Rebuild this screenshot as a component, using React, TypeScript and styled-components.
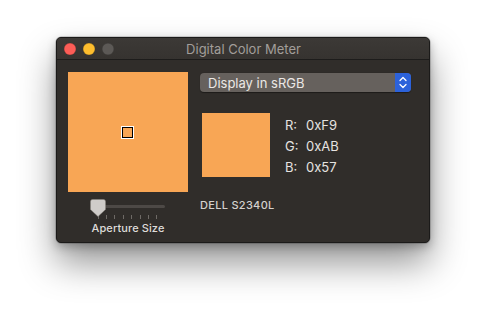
import React from "react";
import styled, { createGlobalStyle } from "styled-components";

const GlobalStyle = createGlobalStyle`
  html, body {
    margin: 0;
    padding: 0;
    background: #ffffff;
  }
  body {
    font-family: Inter, "Noto Sans", "Liberation Sans", sans-serif;
    -webkit-font-smoothing: antialiased;
  }
`;

const Stage = styled.div`
  width: 486px;
  height: 318px;
  padding: 37px 0 0 56px;
  box-sizing: border-box;
  overflow: hidden;
`;

const Window = styled.div`
  width: 374px;
  height: 206px;
  box-sizing: border-box;
  background: #302d2a;
  border: 1px solid #1b1a19;
  border-radius: 5px;
  box-shadow: 0 0 0 0.5px rgba(0, 0, 0, 0.3), 0 20px 36px rgba(0, 0, 0, 0.42),
    0 4px 10px rgba(0, 0, 0, 0.25);
  display: flex;
  flex-direction: column;
  overflow: hidden;
`;

const TitleBar = styled.div`
  height: 21px;
  flex-shrink: 0;
  display: flex;
  align-items: center;
  position: relative;
  background: linear-gradient(#3c3936, #363330);
  border-bottom: 1px solid #1d1c1b;
  padding-left: 7px;
  gap: 7px;
`;

const Light = styled.span<{ $color: string }>`
  width: 12px;
  height: 12px;
  border-radius: 50%;
  background: ${({ $color }) => $color};
  box-shadow: inset 0 0 0 0.5px rgba(0, 0, 0, 0.25);
`;

const Title = styled.div`
  position: absolute;
  inset: 0;
  display: flex;
  align-items: center;
  justify-content: center;
  padding-left: 1px;
  font-size: 13px;
  color: #a29e9a;
  pointer-events: none;
`;

const Body = styled.div`
  flex: 1;
  display: flex;
  padding: 12px 18px 0 11px;
  gap: 12px;
`;

const LeftColumn = styled.div`
  width: 120px;
  display: flex;
  flex-direction: column;
  align-items: center;
`;

const BigSwatch = styled.div`
  width: 120px;
  height: 120px;
  background: #f8a655;
  display: flex;
  align-items: center;
  justify-content: center;
`;

const Aperture = styled.div`
  width: 9px;
  height: 9px;
  margin: 0 0 0 -1px;
  border: 1px solid #000;
  outline: 1px solid #fff;
`;

const Slider = styled.div`
  margin: 7px 0 0 -2px;
  width: 75px;
  height: 21px;
  position: relative;
`;

const Track = styled.div`
  position: absolute;
  left: 1px;
  right: 0;
  top: 6px;
  height: 3px;
  border-radius: 2px;
  background: #4d4946;
`;

const Thumb = styled.svg`
  position: absolute;
  left: 0;
  top: 0;
`;

const Ticks = styled.div`
  position: absolute;
  left: 8px;
  right: 7px;
  top: 16px;
  display: flex;
  justify-content: space-between;
`;

const Tick = styled.span`
  width: 1px;
  height: 4px;
  background: #6e6a66;
`;

const SliderLabel = styled.div`
  margin-top: 1px;
  font-size: 11px;
  font-weight: 500;
  color: #dedbd8;
  letter-spacing: 0.1px;
`;

const RightColumn = styled.div`
  flex: 1;
  display: flex;
  flex-direction: column;
  padding-top: 1px;
`;

const Popup = styled.div`
  height: 19px;
  display: flex;
  border-radius: 4px;
  overflow: hidden;
  background: #66615d;
  box-shadow: 0 0.5px 1px rgba(0, 0, 0, 0.4);
`;

const PopupText = styled.div`
  flex: 1;
  padding-left: 8px;
  display: flex;
  align-items: center;
  font-size: 13px;
  color: #ebe8e5;
`;

const PopupArrows = styled.div`
  width: 16px;
  background: #2c62da;
  display: flex;
  align-items: center;
  justify-content: center;
`;

const ReadoutRow = styled.div`
  margin-top: 21px;
  display: flex;
  align-items: flex-start;
  gap: 16px;
  padding-left: 2px;
`;

const SmallSwatch = styled.div`
  width: 68px;
  height: 64px;
  background: #f8a655;
`;

const Values = styled.div`
  display: grid;
  grid-template-columns: 21px auto;
  margin-left: -1px;
  padding-top: 2px;
`;

const Channel = styled.div`
  font-size: 13px;
  line-height: 21px;
  color: #e6e3e0;
`;

const Display = styled.div`
  margin-top: 20px;
  font-size: 11px;
  font-weight: 500;
  color: #d4d1ce;
  letter-spacing: 0.3px;
`;

const channels = [
  ["R:", "0xF9"],
  ["G:", "0xAB"],
  ["B:", "0x57"],
];

const App = () => {
  return (
    <Stage>
      <GlobalStyle />
      <Window>
        <TitleBar>
          <Light $color="#fc5d57" />
          <Light $color="#fdbd2e" />
          <Light $color="#5c5956" />
          <Title>Digital Color Meter</Title>
        </TitleBar>
        <Body>
          <LeftColumn>
            <BigSwatch>
              <Aperture />
            </BigSwatch>
            <Slider>
              <Track />
              <Ticks>
                {Array.from({ length: 8 }).map((_, i) => (
                  <Tick key={i} />
                ))}
              </Ticks>
              <Thumb width="16" height="18" viewBox="0 0 16 18">
                <path
                  d="M2.5 0.5 H13.5 A2 2 0 0 1 15.5 2.5 V10.5 L8 17.5 L0.5 10.5 V2.5 A2 2 0 0 1 2.5 0.5 Z"
                  fill="#cfccc9"
                  stroke="#8a8681"
                  strokeWidth="0.5"
                />
              </Thumb>
            </Slider>
            <SliderLabel>Aperture Size</SliderLabel>
          </LeftColumn>
          <RightColumn>
            <Popup>
              <PopupText>Display in sRGB</PopupText>
              <PopupArrows>
                <svg width="8" height="13" viewBox="0 0 8 13">
                  <path
                    d="M1 4.5 L4 1.5 L7 4.5 M1 8.5 L4 11.5 L7 8.5"
                    fill="none"
                    stroke="#ffffff"
                    strokeWidth="1.3"
                    strokeLinecap="round"
                    strokeLinejoin="round"
                  />
                </svg>
              </PopupArrows>
            </Popup>
            <ReadoutRow>
              <SmallSwatch />
              <Values>
                {channels.map(([label, value]) => (
                  <React.Fragment key={label}>
                    <Channel>{label}</Channel>
                    <Channel>{value}</Channel>
                  </React.Fragment>
                ))}
              </Values>
            </ReadoutRow>
            <Display>DELL S2340L</Display>
          </RightColumn>
        </Body>
      </Window>
    </Stage>
  );
};

export default App;
